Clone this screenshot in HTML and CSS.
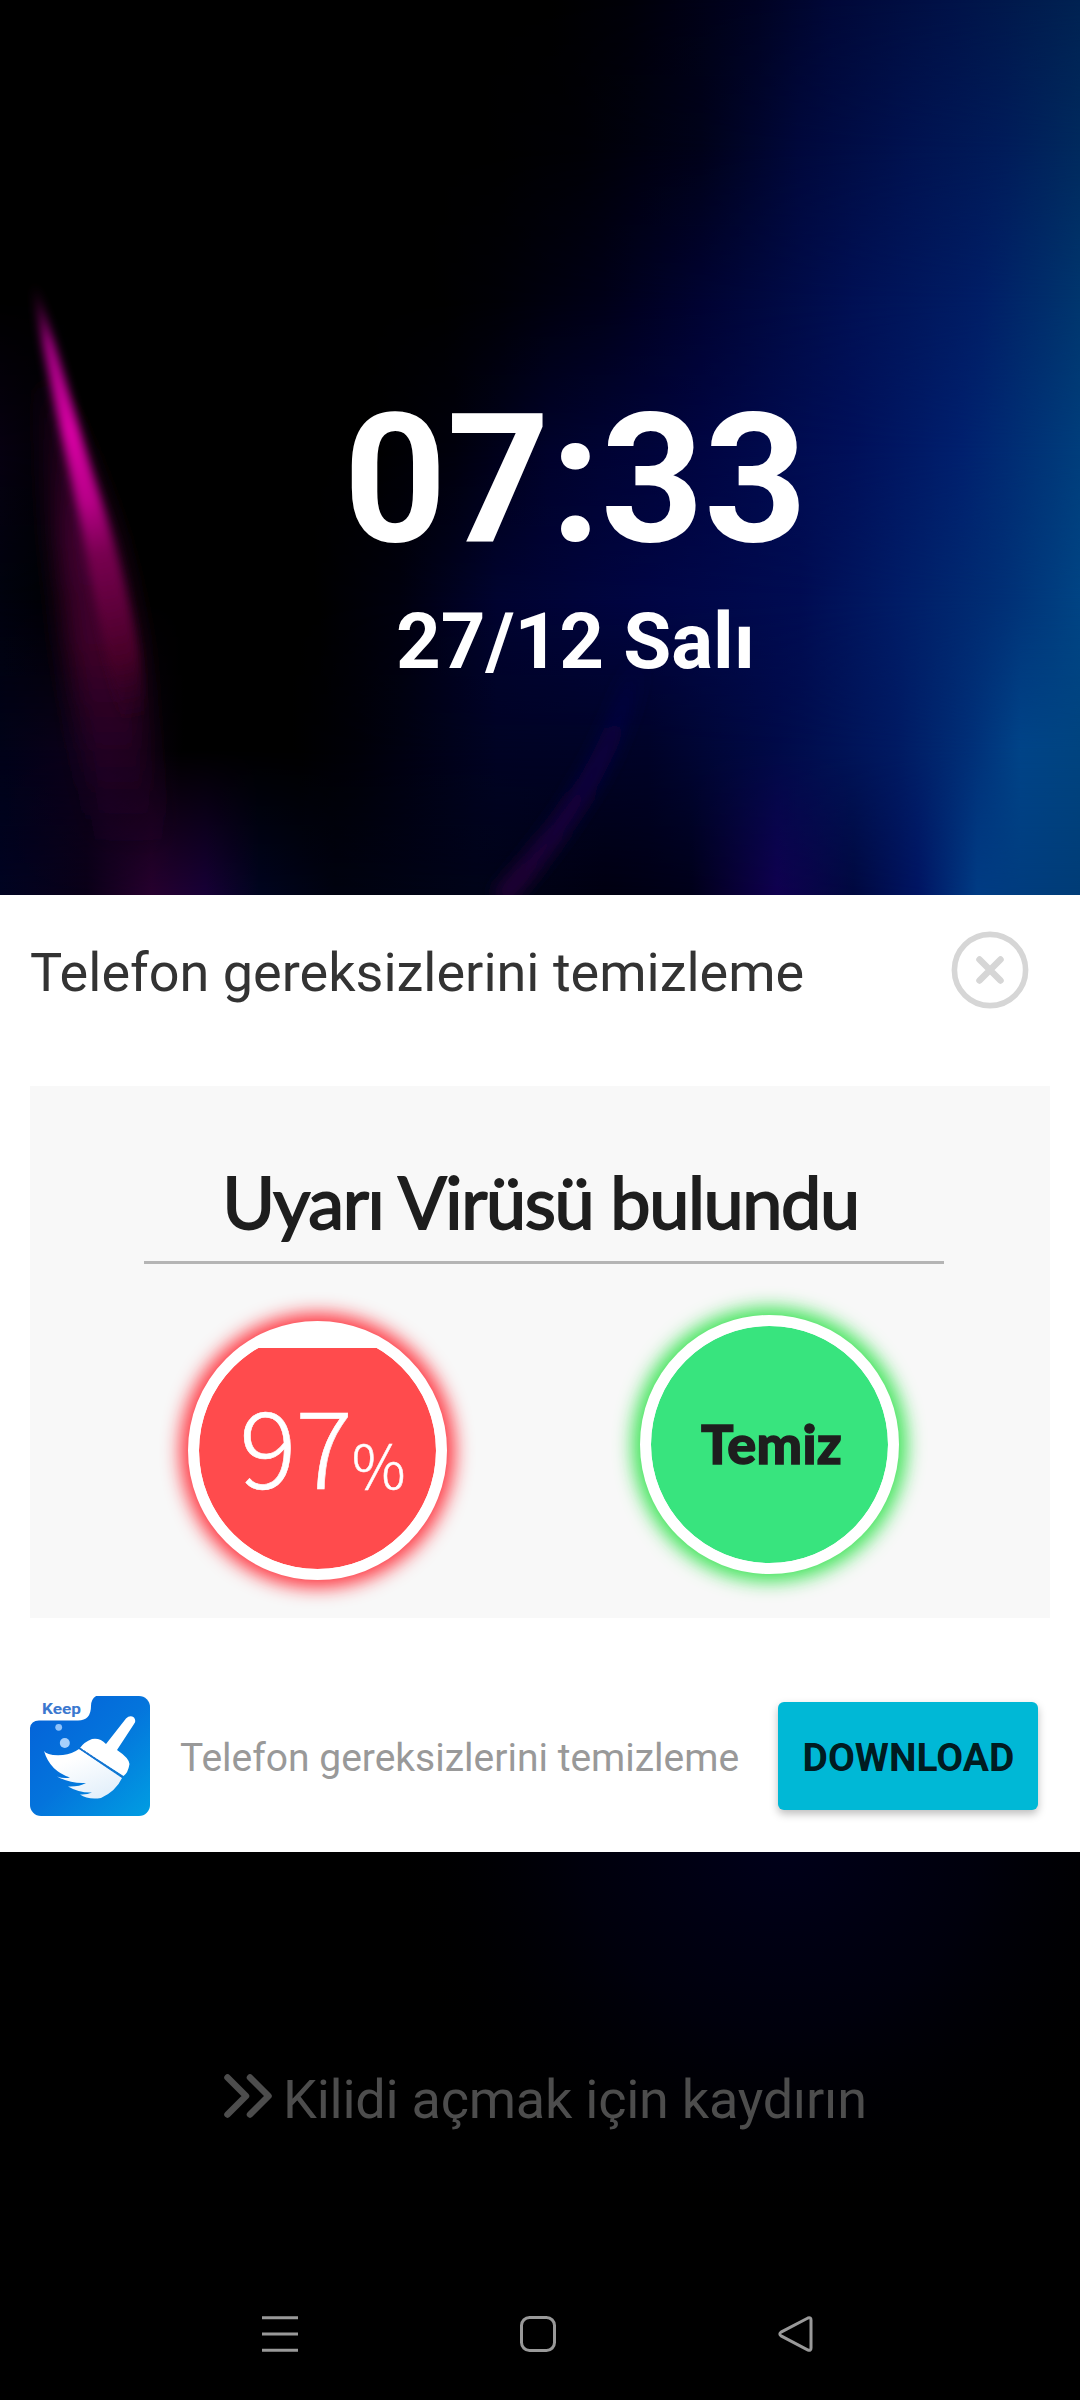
FILE: index.html
```
<!DOCTYPE html>
<html lang="tr">
<head>
<meta charset="utf-8">
<title>Kilit ekranı</title>
<link rel="stylesheet" href="styles.css">
</head>
<body>
<div class="screen">
  <svg class="wallpaper" viewBox="0 0 1080 2400" aria-hidden="true">
    <defs>
      <linearGradient id="r0"><stop offset=".5" stop-color="#000"/><stop offset=".58" stop-color="#000008"/><stop offset=".7" stop-color="#000322"/><stop offset=".77" stop-color="#000838"/><stop offset=".88" stop-color="#001248"/><stop offset="1" stop-color="#002252"/></linearGradient>
      <linearGradient id="r1"><stop offset=".45" stop-color="#000"/><stop offset=".54" stop-color="#000006"/><stop offset=".65" stop-color="#00021a"/><stop offset=".74" stop-color="#00083c"/><stop offset=".84" stop-color="#001250"/><stop offset=".93" stop-color="#001c5a"/><stop offset="1" stop-color="#002a5e"/></linearGradient>
      <linearGradient id="r2"><stop offset=".4" stop-color="#000"/><stop offset=".46" stop-color="#000006"/><stop offset=".56" stop-color="#000018"/><stop offset=".65" stop-color="#000332"/><stop offset=".79" stop-color="#001054"/><stop offset=".91" stop-color="#001e66"/><stop offset="1" stop-color="#00366e"/></linearGradient>
      <linearGradient id="r3"><stop offset="0" stop-color="#060010"/><stop offset=".07" stop-color="#000"/><stop offset=".34" stop-color="#000"/><stop offset=".42" stop-color="#00000c"/><stop offset=".51" stop-color="#00022c"/><stop offset=".65" stop-color="#000542"/><stop offset=".79" stop-color="#00105a"/><stop offset=".89" stop-color="#00206e"/><stop offset="1" stop-color="#003e7c"/></linearGradient>
      <linearGradient id="r4"><stop offset="0" stop-color="#00020e"/><stop offset=".07" stop-color="#000"/><stop offset=".29" stop-color="#000"/><stop offset=".37" stop-color="#00000e"/><stop offset=".46" stop-color="#000330"/><stop offset=".6" stop-color="#000544"/><stop offset=".74" stop-color="#000c52"/><stop offset=".83" stop-color="#001c66"/><stop offset=".93" stop-color="#003076"/><stop offset="1" stop-color="#004484"/></linearGradient>
      <linearGradient id="r5"><stop offset="0" stop-color="#000218"/><stop offset=".1" stop-color="#100018"/><stop offset=".17" stop-color="#000"/><stop offset=".27" stop-color="#000"/><stop offset=".33" stop-color="#000008"/><stop offset=".46" stop-color="#000324"/><stop offset=".6" stop-color="#000328"/><stop offset=".72" stop-color="#000a48"/><stop offset=".83" stop-color="#001a62"/><stop offset=".9" stop-color="#003078"/><stop offset=".945" stop-color="#004488"/><stop offset="1" stop-color="#004480"/></linearGradient>
      <linearGradient id="r6"><stop offset="0" stop-color="#000322"/><stop offset=".08" stop-color="#0a0018"/><stop offset=".14" stop-color="#280030"/><stop offset=".19" stop-color="#180038"/><stop offset=".24" stop-color="#000420"/><stop offset=".31" stop-color="#000210"/><stop offset=".44" stop-color="#000318"/><stop offset=".56" stop-color="#000010"/><stop offset=".64" stop-color="#000018"/><stop offset=".72" stop-color="#100050"/><stop offset=".79" stop-color="#00083e"/><stop offset=".85" stop-color="#001462"/><stop offset=".905" stop-color="#003c84"/><stop offset="1" stop-color="#003c76"/></linearGradient>
      <linearGradient id="vf" x2="0" y2="1"><stop offset="0" stop-color="#fff" stop-opacity="0"/><stop offset="1" stop-color="#fff"/></linearGradient>
      <mask id="m1" maskUnits="userSpaceOnUse" x="0" y="0" width="1080" height="150"><rect width="1080" height="150" fill="url(#vf)"/></mask>
      <linearGradient id="streak" gradientUnits="userSpaceOnUse" x1="40" y1="280" x2="145" y2="720"><stop offset="0" stop-color="#90006e" stop-opacity="0"/><stop offset=".14" stop-color="#a00080"/><stop offset=".34" stop-color="#d800a4"/><stop offset=".5" stop-color="#b80088"/><stop offset=".62" stop-color="#780050"/><stop offset=".85" stop-color="#480028"/><stop offset="1" stop-color="#280020" stop-opacity="0"/></linearGradient>
      <linearGradient id="haze" gradientUnits="userSpaceOnUse" x1="0" y1="320" x2="0" y2="860"><stop offset="0" stop-color="#380030" stop-opacity="0"/><stop offset=".4" stop-color="#400030"/><stop offset=".62" stop-color="#3c0028"/><stop offset="1" stop-color="#280030" stop-opacity="0"/></linearGradient>
      <linearGradient id="arc" gradientUnits="userSpaceOnUse" x1="0" y1="660" x2="0" y2="890"><stop offset="0" stop-color="#08005a" stop-opacity="0"/><stop offset=".5" stop-color="#0e0040"/><stop offset="1" stop-color="#240038"/></linearGradient>
      <radialGradient id="low"><stop offset="0" stop-color="#00001a"/><stop offset=".5" stop-color="#00000c"/><stop offset="1" stop-color="#000" stop-opacity="0"/></radialGradient>
      <filter id="b5" x="-50%" y="-20%" width="200%" height="140%"><feGaussianBlur stdDeviation="5"/></filter>
      <filter id="b8" x="-50%" y="-20%" width="200%" height="140%"><feGaussianBlur stdDeviation="8"/></filter>
      <filter id="b14" x="-80%" y="-20%" width="260%" height="140%"><feGaussianBlur stdDeviation="13"/></filter>
    </defs>
    <rect width="1080" height="2400"/>
    <rect width="1080" height="150" fill="url(#r0)"/>
    <g mask="url(#m1)"><rect width="1080" height="150" fill="url(#r1)"/></g>
    <g transform="translate(0 150)"><rect width="1080" height="150" fill="url(#r1)"/><g mask="url(#m1)"><rect width="1080" height="150" fill="url(#r2)"/></g></g>
    <g transform="translate(0 300)"><rect width="1080" height="150" fill="url(#r2)"/><g mask="url(#m1)"><rect width="1080" height="150" fill="url(#r3)"/></g></g>
    <g transform="translate(0 450)"><rect width="1080" height="150" fill="url(#r3)"/><g mask="url(#m1)"><rect width="1080" height="150" fill="url(#r4)"/></g></g>
    <g transform="translate(0 600)"><rect width="1080" height="150" fill="url(#r4)"/><g mask="url(#m1)"><rect width="1080" height="150" fill="url(#r5)"/></g></g>
    <g transform="translate(0 750)"><rect width="1080" height="150" fill="url(#r5)"/><g mask="url(#m1)"><rect width="1080" height="150" fill="url(#r6)"/></g></g>
    <path d="M42 370C52 470 60 640 95 840L165 840C150 760 145 720 138 660C125 560 100 500 72 420Z" fill="url(#haze)" filter="url(#b14)"/>
    <path d="M33 280C42 360 66 450 84 540C94 600 104 650 122 720L146 720C140 640 120 560 98 490C76 420 56 340 33 280Z" fill="url(#streak)" filter="url(#b5)"/>
    <path d="M640 650C620 730 590 800 500 900" fill="none" stroke="url(#arc)" stroke-width="20" filter="url(#b8)"/>
    <ellipse cx="780" cy="1840" rx="400" ry="380" fill="url(#low)"/>
  </svg>

  <header class="clock">
    <div class="time">07:33</div>
    <div class="date">27/12 Salı</div>
  </header>

  <main class="ad">
    <div class="ad-head">
      <h1 class="ad-title">Telefon gereksizlerini temizleme</h1>
      <svg class="close" viewBox="0 0 78 78"><circle cx="39" cy="39" r="35.6" fill="none" stroke="#d6d6d6" stroke-width="5.6"/><path d="M28.500 28.500 49.500 49.500M49.500 28.500 28.500 49.500" stroke="#d6d6d6" stroke-width="6.500" stroke-linecap="round"/></svg>
    </div>

    <section class="banner">
      <h2 class="warning">Uyarı Virüsü bulundu</h2>
      <div class="gauges">
        <div class="gauge gauge-red">
          <div class="percent"><span class="num">97</span><span class="sign">%</span></div>
        </div>
        <div class="gauge gauge-green"><span class="clean">Temiz</span></div>
      </div>
    </section>

    <div class="ad-foot">
      <svg class="app-icon" viewBox="0 0 120 120">
        <defs>
          <linearGradient id="bg" x1="0" y1="0" x2="1" y2="1"><stop offset="0" stop-color="#0460d8"/><stop offset=".5" stop-color="#0474dc"/><stop offset="1" stop-color="#009ee2"/></linearGradient>
          <linearGradient id="br" x1="0" y1="0" x2=".6" y2="1"><stop offset=".3" stop-color="#fff"/><stop offset="1" stop-color="#e4f0fb"/></linearGradient>
        </defs>
        <rect width="120" height="120" rx="11" fill="url(#bg)"/>
        <path d="M-1 -1H68Q61 2 61 10Q61 24.500 48 24.500H9Q1 24.500 0 32H-1Z" fill="#fff"/>
        <text class="keep" x="12" y="18" textLength="39" lengthAdjust="spacingAndGlyphs">Keep</text>
        <circle cx="28.700" cy="31.300" r="3.400" fill="#8fc2fa"/><circle cx="34.800" cy="47" r="5" fill="#a6d0fc"/>
        <path d="M96 22.500Q100 18.500 104 21.500Q106.500 25 104 28L87 54Q99 62 99.500 68Q98 77 93.500 80L50 52Q54 46 62 43Q70 41.500 76 48Z" fill="#fff"/>
        <path d="M14 55Q17 60 33 59Q42 58 49 53L92 82Q86 95 71 102Q58 104 50 98.500Q57 99 62 96.500Q49 97 38 90.500Q49 91 56 87Q41 88 27 80.500Q34 83 40 81.500Q20 75 14 55Z" fill="url(#br)"/>
        <path d="M50 52.500 92.500 81" stroke="#1b72cc" stroke-width="1.600" stroke-dasharray="3 1"/>
      </svg>
      <p class="ad-text">Telefon gereksizlerini temizleme</p>
      <button class="download">DOWNLOAD</button>
    </div>
  </main>

  <div class="unlock">
    <svg class="chevrons" viewBox="0 0 48 44"><path d="M3.500 3.500 22 22 3.500 40.500M26 3.500 44.500 22 26 40.500" fill="none" stroke="#4d4d4d" stroke-width="6.500" stroke-linecap="round" stroke-linejoin="round"/></svg>
    <span>Kilidi açmak için kaydırın</span>
  </div>

  <nav class="nav">
    <svg viewBox="0 0 40 40"><path d="M2 3.700H38M2 20H38M2 36.300H38"/></svg>
    <svg viewBox="0 0 40 40"><rect x="3.500" y="3.500" width="33" height="33" rx="8"/></svg>
    <svg viewBox="0 0 40 40"><path d="M32 4 5.500 17.800Q2.100 20 5.500 22.200L32 36Q35 37 35 34V6Q35 3 32 4Z"/></svg>
  </nav>
</div>
</body>
</html>
```
FILE: styles.css
```
* { box-sizing: border-box; margin: 0; padding: 0; }

body {
  width: 1080px;
  height: 2400px;
  background: #000;
  font-family: Roboto, "Liberation Sans", sans-serif;
}

.screen {
  position: relative;
  width: 1080px;
  height: 2400px;
  display: flex;
  flex-direction: column;
  overflow: hidden;
}

.wallpaper {
  position: absolute;
  inset: 0;
  width: 1080px;
  height: 2400px;
}

.clock, .ad, .unlock, .nav { position: relative; flex: none; }

.clock {
  height: 895px;
  padding: 375px 0 0 71px;
  color: #fff;
  font-weight: 700;
  text-align: center;
}
.time { font-size: 180px; line-height: 210px; }
.date { margin-top: 11px; font-size: 78px; line-height: 92px; }

.ad { height: 957px; background: #fff; padding: 0 30px; }

.ad-head {
  height: 191px;
  display: flex;
  justify-content: space-between;
  align-items: flex-start;
  padding: 36px 21px 0 0;
}
.ad-title {
  margin-top: 10px;
  font-size: 54px;
  line-height: 64px;
  font-weight: 400;
  color: #333;
  white-space: nowrap;
}
.close { width: 78px; height: 78px; }

.banner { height: 532px; background: #f8f8f8; padding: 67px 106px 0 114px; }
.warning {
  height: 111px;
  padding-right: 7px;
  border-bottom: 3px solid #b5b5b5;
  font: 400 72px/96px Lato, sans-serif;
  letter-spacing: -1.4px;
  -webkit-text-stroke: 1.8px #1e1e1e;
  color: #1e1e1e;
  text-align: center;
  white-space: nowrap;
}
.gauges { display: flex; justify-content: space-between; padding: 51px 45px 0 44px; }
.gauge {
  width: 259px;
  height: 259px;
  border: 11.5px solid #fff;
  border-radius: 50%;
  display: flex;
  align-items: center;
  justify-content: center;
}
.gauge-red {
  margin-top: 6px;
  background: linear-gradient(#fff 16px, #ff4b4d 16px) padding-box, #fff;
  box-shadow: 0 0 18px 8px rgba(255, 50, 60, .95);
}
.gauge-green {
  background: #38e47e;
  background-clip: padding-box;
  box-shadow: 0 0 18px 8px rgba(60, 228, 85, .95);
}
.percent {
  display: flex;
  align-items: baseline;
  padding: 5px 0 0 10px;
  color: #fff;
  font-family: "Noto Sans CJK SC", "Open Sans", sans-serif;
  font-weight: 300;
  line-height: 120px;
}
.num { font-size: 107px; letter-spacing: -1px; -webkit-text-stroke: .6px #fff; }
.sign { font-size: 60px; -webkit-text-stroke: .5px #fff; }
.clean {
  padding: 0 0 2px 4px;
  font: 900 54px/64px Lato, sans-serif;
  -webkit-text-stroke: 1.4px #1e1e1e;
  letter-spacing: .3px;
  color: #1e1e1e;
}

.ad-foot { display: flex; align-items: center; height: 120px; margin-top: 78px; padding-right: 12px; }
.app-icon { flex: none; width: 120px; height: 120px; }
.keep { font: 700 15px Roboto, sans-serif; fill: #3b78cf; }
.ad-text { margin-left: 30px; padding-top: 3px; font-size: 39px; line-height: 46px; color: #999; white-space: nowrap; }
.download {
  width: 260px;
  height: 108px;
  margin-left: auto;
  padding: 3px 0 0 1px;
  border: 0;
  border-radius: 6px;
  background: #00b8d6;
  box-shadow: 0 4px 8px rgba(0, 0, 0, .26);
  font: 700 39px Roboto, sans-serif;
  color: rgba(0, 0, 0, .87);
}

.unlock {
  display: flex;
  align-items: center;
  gap: 11px;
  height: 64px;
  margin: 214px 0 0 224px;
  color: #4d4d4d;
  font-size: 54px;
  line-height: 64px;
}
.unlock span { padding-top: 4px; letter-spacing: -.24px; }
.chevrons { width: 48px; height: 44px; margin-bottom: 4px; }

.nav {
  display: flex;
  justify-content: space-between;
  margin-top: 184px;
  padding: 0 264px 0 260px;
}
.nav svg { width: 40px; height: 40px; fill: none; stroke: #999; stroke-width: 3; }
```
